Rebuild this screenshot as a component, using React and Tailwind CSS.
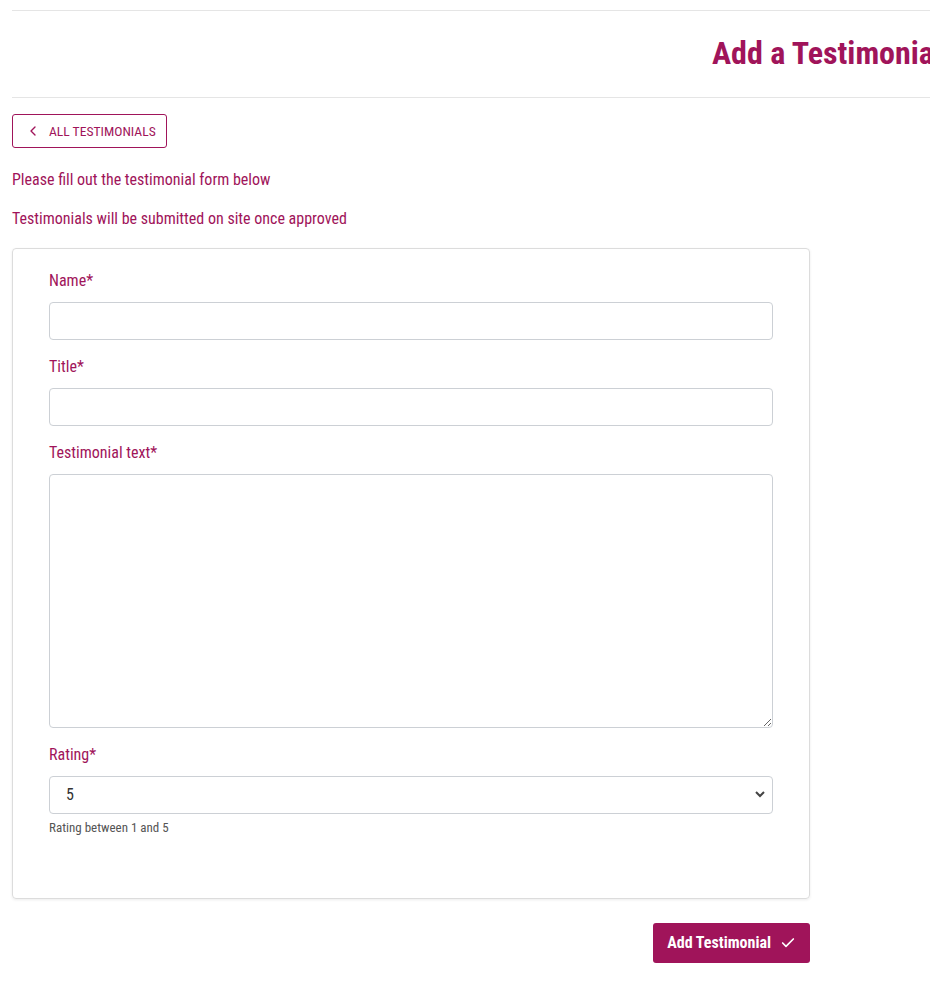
import React, { useState } from 'react';
import { ChevronLeft, Check } from 'lucide-react';

const font = { fontFamily: '"Roboto Condensed", Roboto, "Liberation Sans", sans-serif', fontStretch: 'condensed' };

const Field = ({ label, children }) => (
  <div className="mb-[17px]">
    <label className="block text-[16px] leading-[20px] text-[#a0145a] mb-[11px]">{label}</label>
    {children}
  </div>
);

const App = () => {
  const [name, setName] = useState('');
  const [title, setTitle] = useState('');
  const [text, setText] = useState('');
  const [rating, setRating] = useState('5');

  return (
    <div className="overflow-x-hidden min-h-screen bg-white" style={font}>
      <div className="pt-[10px] pl-3 w-[950px]">
        <div className="border-t border-b border-[#e5e5e5] h-[88px] flex items-center justify-end pr-[8px]">
          <h1 className="text-[32px] font-bold text-[#a0145a] leading-none pb-[2px]">Add a Testimonial</h1>
        </div>
      </div>

      <main className="px-3 pt-[16px] w-[822px]">
        <button className="flex items-center h-[34px] pl-[12px] pr-[10px] border border-[#a0145a] rounded-[3px] text-[#a0145a] text-[13.6px]">
          <ChevronLeft className="h-4 w-4 mr-[8px]" strokeWidth={2} />
          ALL TESTIMONIALS
        </button>

        <p className="mt-[22px] text-[16px] leading-[20px] text-[#a0145a]">Please fill out the testimonial form below</p>
        <p className="mt-[19px] text-[16px] leading-[20px] text-[#a0145a]">Testimonials will be submitted on site once approved</p>

        <div className="mt-[19px] border border-[#dcdcdc] rounded-[4px] shadow-[0_1px_3px_rgba(0,0,0,0.08)] px-[36px] pt-[22px] pb-[62px]">
          <Field label="Name*">
            <input value={name} onChange={(e) => setName(e.target.value)} className="block w-full h-[38px] border border-[#ccd0d5] rounded-[4px] px-3 outline-none" />
          </Field>
          <Field label="Title*">
            <input value={title} onChange={(e) => setTitle(e.target.value)} className="block w-full h-[38px] border border-[#ccd0d5] rounded-[4px] px-3 outline-none" />
          </Field>
          <Field label="Testimonial text*">
            <textarea value={text} onChange={(e) => setText(e.target.value)} className="block w-full h-[254px] border border-[#ccd0d5] rounded-[4px] px-3 py-2 outline-none" />
          </Field>
          <div>
            <label className="block text-[16px] leading-[20px] text-[#a0145a] mb-[11px]">Rating*</label>
            <div className="relative">
              <select value={rating} onChange={(e) => setRating(e.target.value)} className="block w-full h-[38px] appearance-none border border-[#ccd0d5] rounded-[4px] pl-[16px] text-[16px] text-[#333] bg-white outline-none">
                {[1, 2, 3, 4, 5].map((n) => (
                  <option key={n} value={n}>{n}</option>
                ))}
              </select>
              <svg className="absolute right-[8px] top-[15px] pointer-events-none" width="10" height="7" viewBox="0 0 10 7">
                <path d="M1 1l4 4 4-4" fill="none" stroke="#444" strokeWidth="2" />
              </svg>
            </div>
            <p className="mt-[6px] text-[13px] leading-[16px] text-[#555]">Rating between 1 and 5</p>
          </div>
        </div>

        <div className="flex justify-end mt-[24px]">
          <button className="flex items-center h-[40px] px-[14px] bg-[#a0145a] rounded-[3px] text-white text-[16px] font-bold">
            Add Testimonial
            <Check className="h-4 w-4 ml-[9px]" strokeWidth={2.5} />
          </button>
        </div>
      </main>
    </div>
  );
};

export default App;
